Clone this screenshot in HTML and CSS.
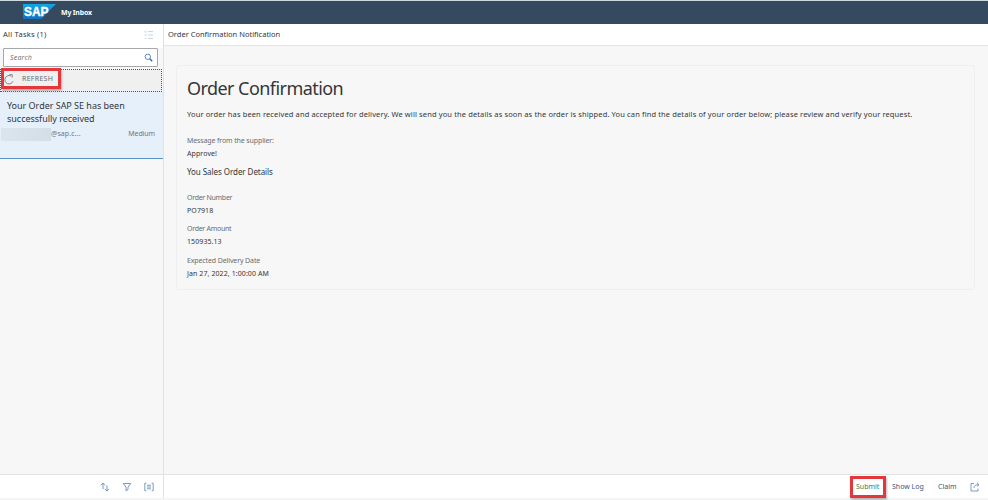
FILE: index.html
```html
<!DOCTYPE html>
<html lang="en">
<head>
<meta charset="utf-8">
<title>My Inbox</title>
<link rel="stylesheet" href="styles.css">
</head>
<body>
<header class="shell">
  <svg class="logo" viewBox="0 0 33 15" width="33" height="15">
    <defs><linearGradient id="g" x1="0" y1="0" x2="0" y2="1"><stop offset="0" stop-color="#12a5e6"/><stop offset="1" stop-color="#1272c4"/></linearGradient></defs>
    <path d="M0 0H33L18 15H0Z" fill="url(#g)"/>
    <text class="logo-text" x="1" y="12" textLength="24.5" lengthAdjust="spacingAndGlyphs">SAP</text>
  </svg>
  <span class="shell-title">My Inbox</span>
</header>
<div class="main">
  <aside class="master">
    <div class="master-head">
      <span class="all-tasks">All Tasks (1)</span>
      <svg class="list-icon" viewBox="0 0 10 10" width="10" height="10"><path d="M4 1.5H9M4 5H9M4 8.5H9M.5 1.5L1.3 2.3L2.7.5M.5 5L1.3 5.8L2.7 4M.8 8.5H2.2"/></svg>
    </div>
    <div class="search"><span class="search-text">Search</span>
      <svg class="icon search-icon" viewBox="0 0 9 9" width="9" height="9"><circle cx="3.8" cy="3.8" r="2.7"/><path d="M5.8 5.8L8.2 8.2" stroke-width="1.5"/></svg>
    </div>
    <div class="refresh">
      <svg class="refresh-icon" viewBox="0 0 11 11" width="11" height="11"><path d="M9 7.2A4.2 4.2 0 1 1 7 2M5.4.7H8.2V3.5"/></svg>
      <span class="refresh-text">REFRESH</span>
      <i class="mark mark-refresh"></i>
    </div>
    <article class="task">
      <h2 class="task-title">Your Order SAP SE has been<br>successfully received</h2>
      <div class="task-meta"><i class="redacted"></i><span class="mail">@sap.c...</span><span class="priority">Medium</span></div>
    </article>
    <footer class="bar master-bar">
      <svg class="icon" viewBox="0 0 10 10" width="10" height="10"><path d="M3 7V1.3M.8 3.4L3 1.1L5.2 3.4M7 3.5V9M4.8 6.9L7 9.1L9.2 6.9"/></svg>
      <svg class="icon" viewBox="0 0 10 10" width="10" height="10"><path d="M1.2 1.5H8.8L6 5.2V7.6L4 8.7V5.2Z"/></svg>
      <svg class="icon" viewBox="0 0 10 10" width="10" height="10"><path d="M2.3 1.3H.8V8.7H2.3M7.7 1.3H9.2V8.7H7.7M3 3.2H7M3 5H7M3 6.8H7"/></svg>
    </footer>
  </aside>
  <section class="detail">
    <div class="detail-head"><span class="detail-title">Order Confirmation Notification</span></div>
    <div class="detail-body">
      <div class="card">
        <h1 class="heading">Order Confirmation</h1>
        <p class="lead">Your order has been received and accepted for delivery. We will send you the details as soon as the order is shipped. You can find the details of your order below; please review and verify your request.</p>
        <div class="label first">Message from the supplier:</div>
        <div class="value">Approve!</div>
        <div class="subhead">You Sales Order Details</div>
        <div class="label group tight">Order Number</div>
        <div class="value">PO7918</div>
        <div class="label tight">Order Amount</div>
        <div class="value">150935.13</div>
        <div class="label">Expected Delivery Date</div>
        <div class="value">Jan 27, 2022, 1:00:00 AM</div>
      </div>
    </div>
    <footer class="bar detail-bar">
      <span class="submit">Submit<i class="mark mark-submit"></i></span>
      <span class="show-log">Show Log</span>
      <span class="claim">Claim</span>
      <svg class="icon share" viewBox="0 0 10 10" width="10" height="10"><path d="M4 1.5H1V9H8V6.5M4 6C4 3.5 5.5 2.7 8.7 2.7M7 .8L9 2.7L7 4.6"/></svg>
    </footer>
  </section>
</div>
</body>
</html>
```
FILE: styles.css
```css
* { box-sizing: border-box; }
body { margin: 0; width: 988px; height: 500px; overflow: hidden; background: #f4f4f4; color: #32363a; font-family: "Noto Sans", "Open Sans", sans-serif; font-size: 7px; display: flex; flex-direction: column; white-space: nowrap; }
h1, h2, p { margin: 0; font-weight: 400; }
.shell { height: 24px; flex: none; background: #354a5f; border-top: 1px solid #cfd8dc; display: flex; align-items: center; padding: 0 0 3px 23px; }
.logo { display: block; }
.logo-text { font: bold 13px "Liberation Sans", sans-serif; fill: #fff; stroke: #fff; stroke-width: .4; }
.shell-title { margin: 3px 0 0 5px; color: #fff; font-weight: 700; font-size: 7px; letter-spacing: -.2px; }
.main { height: 474px; display: flex; }
.master { width: 164px; flex: none; border-right: 1px solid #e2e2e2; background: #f7f7f7; display: flex; flex-direction: column; }
.master-head { height: 24px; background: #fff; display: flex; align-items: center; justify-content: space-between; padding: 0 9px 3px 3px; }
.all-tasks { font-size: 7.5px; letter-spacing: .25px; margin-top: -1px; }
.list-icon { fill: none; stroke: #b9cde0; stroke-width: .8; }
.search { height: 19px; margin: 0 5px 0 3px; border: 1px solid #a5a8ab; border-radius: 1px; background: #fff; display: flex; align-items: center; justify-content: space-between; padding: 0 4px 0 6px; }
.search-text { font-style: italic; color: #74777a; letter-spacing: .2px; }
.icon { fill: none; stroke: #5c82ad; stroke-width: .8; flex: none; }
.search-icon { stroke: #2f6fb5; }
.refresh { position: relative; height: 23px; margin: 2px 1px 0 0; border: 1px dotted #555; background: #f0f0f0; display: flex; padding: 4px 0 0 3px; }
.refresh-icon { fill: none; stroke: #777; stroke-width: .9; }
.refresh-text { margin-left: 7px; color: #6a6d70; font-size: 7px; line-height: 10px; letter-spacing: .3px; }
.mark { position: absolute; border: 3px solid #e4373c; box-shadow: 1px 2px 2px #8889; }
.mark-refresh { left: 0; top: -2px; width: 60px; height: 21px; }
.task { height: 67px; background: #e5f0fa; border-bottom: 1px solid #5b92cc; padding-top: 8px; }
.task-title { font-size: 9px; line-height: 12.5px; padding-left: 7px; letter-spacing: -.02px; }
.task-meta { display: flex; height: 13px; margin-top: 3px; padding: 0 8px 0 1px; color: #74777a; line-height: 12px; }
.redacted { width: 50px; background: linear-gradient(90deg, #dbe5ee, #d3dee7); }
.mail { letter-spacing: .1px; }
.priority { margin-left: auto; letter-spacing: -.1px; }
.bar { margin-top: auto; height: 24px; flex: none; border-top: 1px solid #e3e3e3; background: #fff; display: flex; align-items: center; }
.master-bar { gap: 12px; padding-left: 100px; }
.detail { flex: 1; background: #f7f7f7; display: flex; flex-direction: column; }
.detail-head { height: 22px; flex: none; background: #fff; border-bottom: 1px solid #e5e5e5; line-height: 21px; padding-left: 4px; }
.detail-title { font-size: 7.5px; }
.detail-body { padding: 19px 13px 0 12px; }
.card { height: 225px; border: 1px solid #efefef; border-radius: 4px; padding: 10px 0 0 10px; }
.heading { font-size: 18px; line-height: 24px; letter-spacing: -.56px; }
.lead { margin-top: 8px; line-height: 12px; font-size: 7.5px; letter-spacing: .121px; }
.label, .value { line-height: 12px; }
.label { color: #6a6d70; margin-top: 6.5px; letter-spacing: -.12px; }
.value { margin-top: 1px; letter-spacing: .09px; }
.label.tight { letter-spacing: -.28px; }
.label.first { margin-top: 15px; }
.subhead { font-size: 8px; line-height: 12px; margin-top: 5.5px; letter-spacing: -.06px; }
.label.group { margin-top: 14px; }
.detail-bar { color: #34597f; }
.submit { position: relative; margin-left: 692px; width: 36px; color: #3f7d4c; }
.mark-submit { left: -6px; top: -6px; width: 36px; height: 22px; }
.show-log { width: 46px; }
.claim { width: 32px; }
```
